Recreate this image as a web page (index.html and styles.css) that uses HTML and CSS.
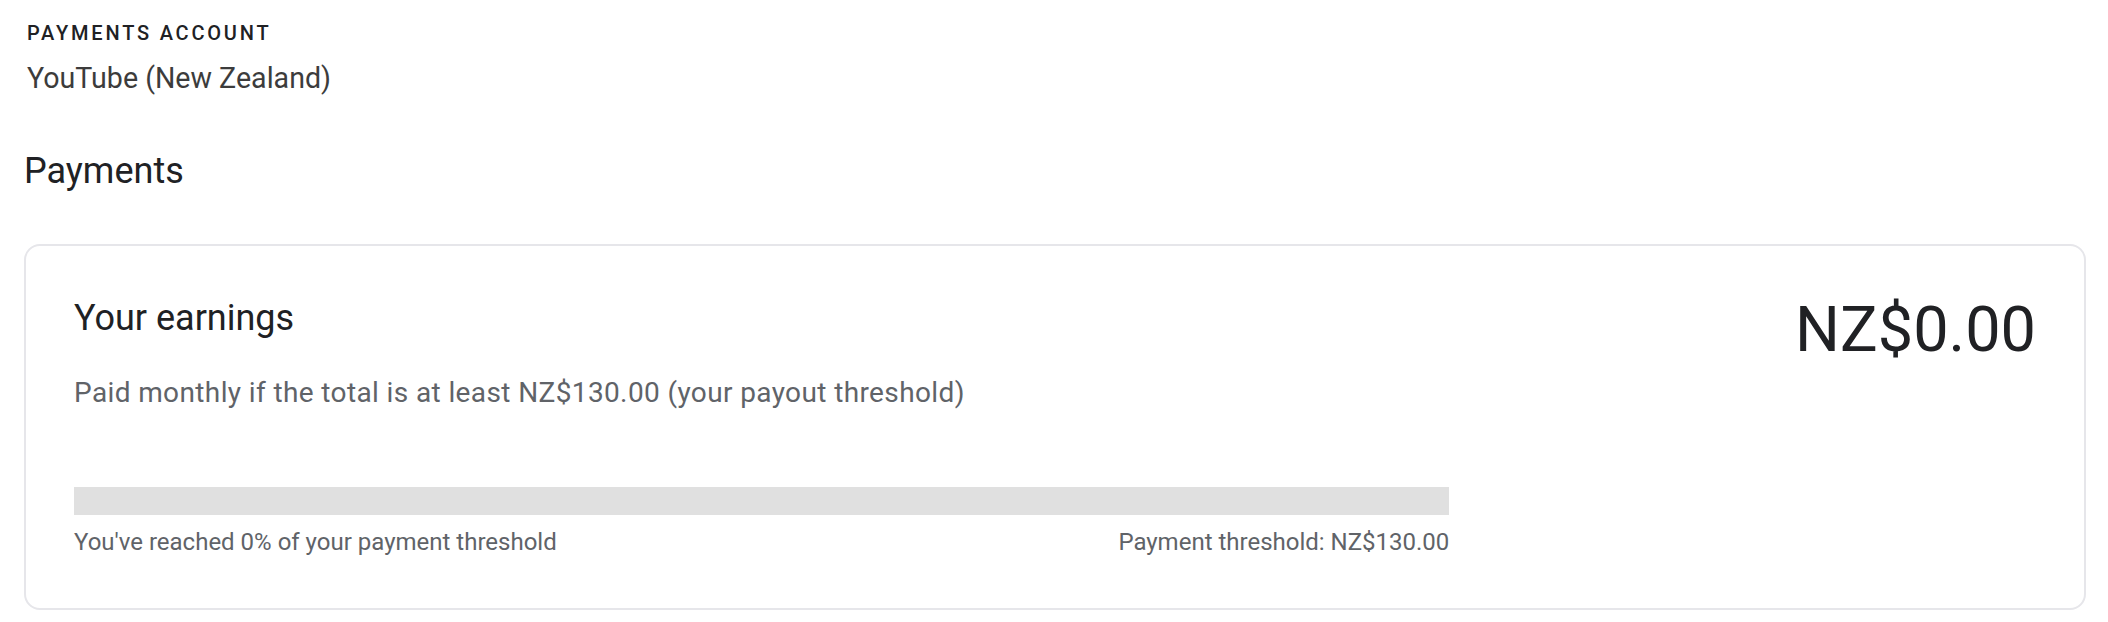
FILE: index.html
```html
<!DOCTYPE html>
<html lang="en">
<head>
<meta charset="utf-8">
<title>Payments</title>
<link rel="stylesheet" href="styles.css">
</head>
<body>
<main class="page">
  <section class="account">
    <div class="account-label">PAYMENTS ACCOUNT</div>
    <div class="account-name">YouTube (New Zealand)</div>
  </section>
  <h2 class="section-title">Payments</h2>
  <div class="card">
    <div class="card-main">
      <h3 class="card-title">Your earnings</h3>
      <p class="card-desc">Paid monthly if the total is at least NZ$130.00 (your payout threshold)</p>
      <div class="progress">
        <div class="progress-bar"><div class="progress-fill" style="width:0%"></div></div>
        <div class="progress-labels">
          <span>You've reached 0% of your payment threshold</span>
          <span>Payment threshold: NZ$130.00</span>
        </div>
      </div>
    </div>
    <div class="card-amount">NZ$0.00</div>
  </div>
</main>
</body>
</html>
```

FILE: styles.css
```css
html, body {
  margin: 0;
  padding: 0;
  background: #ffffff;
}

body {
  font-family: Roboto, "Liberation Sans", Arial, sans-serif;
  color: #202124;
}

.page {
  padding: 21px 22px 0 24px;
}

.account {
  display: flex;
  flex-direction: column;
  gap: 15px;
  padding-left: 3px;
}

.account-label {
  font-size: 20px;
  line-height: 24px;
  font-weight: 500;
  letter-spacing: 2.8px;
  color: #202124;
}

.account-name {
  font-size: 28.6px;
  line-height: 36px;
  color: #3c3c3c;
}

.section-title {
  margin: 53px 0 51px;
  font-size: 36px;
  line-height: 44px;
  font-weight: 400;
  color: #202124;
}

.card {
  display: flex;
  justify-content: space-between;
  align-items: flex-start;
  border: 2px solid #e6e6ea;
  border-radius: 16px;
  padding: 52px 48px 51px 48px;
}

.card-main {
  width: 70.1%;
}

.card-title {
  margin: 0;
  font-size: 36px;
  line-height: 40px;
  font-weight: 400;
  color: #202124;
}

.card-desc {
  margin: 37px 0 0;
  font-size: 28px;
  line-height: 36px;
  letter-spacing: 0.38px;
  color: #606368;
}

.progress {
  margin-top: 76px;
}

.progress-bar {
  height: 28px;
  background: #e0e0e0;
}

.progress-fill {
  height: 100%;
  background: #065fd4;
}

.progress-labels {
  display: flex;
  justify-content: space-between;
  margin-top: 12px;
  font-size: 24px;
  line-height: 30px;
  color: #606368;
}

.card-amount {
  font-size: 63px;
  line-height: 63px;
  color: #202124;
}
```
